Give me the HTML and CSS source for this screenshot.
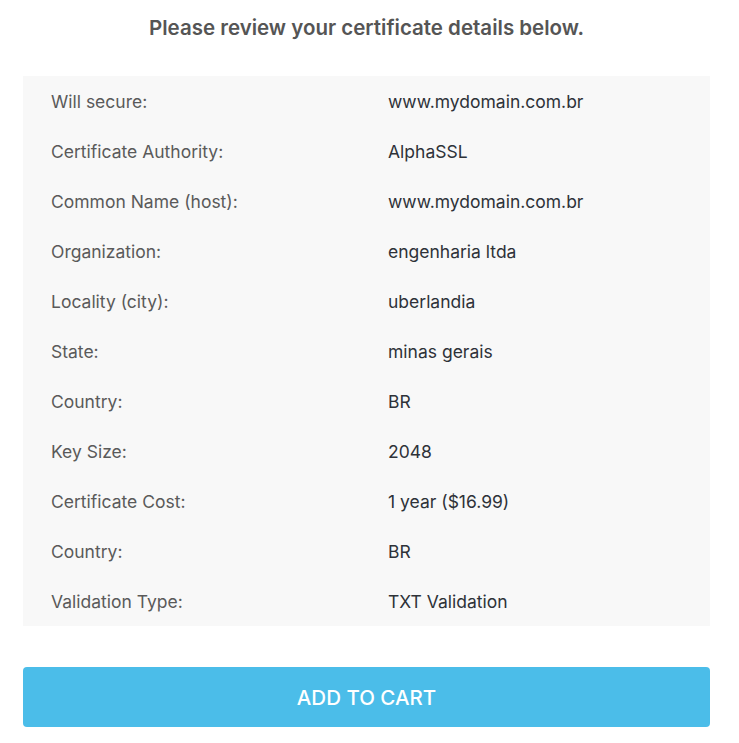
FILE: index.html
```html
<!DOCTYPE html>
<html lang="en">
<head>
  <meta charset="UTF-8">
  <meta name="viewport" content="width=device-width, initial-scale=1.0">
  <title>Review certificate</title>
  <link rel="stylesheet" href="styles.css">
</head>
<body>
  <h2>Please review your certificate details below.</h2>

  <div class="details">
    <div class="row"><span class="label">Will secure:</span><span class="value">www.mydomain.com.br</span></div>
    <div class="row"><span class="label">Certificate Authority:</span><span class="value">AlphaSSL</span></div>
    <div class="row"><span class="label">Common Name (host):</span><span class="value">www.mydomain.com.br</span></div>
    <div class="row"><span class="label">Organization:</span><span class="value">engenharia ltda</span></div>
    <div class="row"><span class="label">Locality (city):</span><span class="value">uberlandia</span></div>
    <div class="row"><span class="label">State:</span><span class="value">minas gerais</span></div>
    <div class="row"><span class="label">Country:</span><span class="value">BR</span></div>
    <div class="row"><span class="label">Key Size:</span><span class="value">2048</span></div>
    <div class="row"><span class="label">Certificate Cost:</span><span class="value">1 year ($16.99)</span></div>
    <div class="row"><span class="label">Country:</span><span class="value">BR</span></div>
    <div class="row"><span class="label">Validation Type:</span><span class="value">TXT Validation</span></div>
  </div>

  <button class="cart-btn">ADD TO CART</button>
</body>
</html>
```

FILE: styles.css
```css
* { box-sizing: border-box; }
body {
  font-family: "Inter", "Open Sans", Arial, sans-serif;
  margin: 0;
  padding: 0 29px 0 23px;
  background-color: #fff;
  width: 739px;
}
h2 {
  text-align: center;
  font-size: 20.5px;
  font-weight: 600;
  color: #555;
  margin: 0;
  padding-top: 15px;
  height: 76px;
}
.details {
  background: #f8f8f8;
  padding: 0 28px;
}
.row {
  display: grid;
  grid-template-columns: 337px 1fr;
  height: 50px;
  align-items: center;
  font-size: 17.5px;
}
.label { color: #5a5a5a; }
.value { color: #2e3238; }
.cart-btn {
  display: block;
  width: 100%;
  height: 60px;
  margin-top: 41px;
  background-color: #4bbde9;
  color: #fff;
  border: none;
  border-radius: 4px;
  font-family: inherit;
  font-size: 20.5px;
  font-weight: 500;
}
```
